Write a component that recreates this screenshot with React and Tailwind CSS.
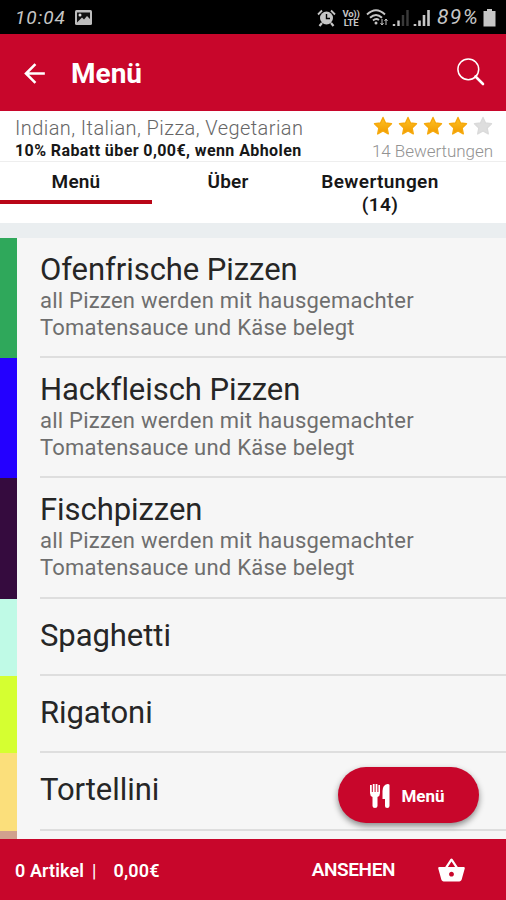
import { MdArrowBack, MdShoppingBasket } from 'react-icons/md';

const categories = [
  { name: 'Ofenfrische Pizzen', text: true, color: 'bg-[#2fa85b]', size: 'h-[120px]' },
  { name: 'Hackfleisch Pizzen', text: true, color: 'bg-[#2400ff]', size: 'h-[120px]' },
  { name: 'Fischpizzen', text: true, color: 'bg-[#350b3e]', size: 'h-[121px]' },
  { name: 'Spaghetti', color: 'bg-[#bffae6]', size: 'h-[77px]' },
  { name: 'Rigatoni', color: 'bg-[#d5ff31]', size: 'h-[77px]' },
  { name: 'Tortellini', color: 'bg-[#fbdf7b]', size: 'h-[78px]' },
];

function StatusBar() {
  return (
    <div className="flex h-[34px] shrink-0 items-center justify-between bg-black pl-[15px] pr-[10px] text-[#c6c6c6]">
      <div className="flex items-center">
        <span className="w-[59px] whitespace-nowrap text-[19px] italic leading-none tracking-[1px]">10:04</span>
        <svg width="19" height="17" viewBox="0 0 19 17">
          <rect x="1" y="1" width="17" height="15" rx="1.5" fill="#bdbdbd" />
          <path d="M3 3.5h13v6.5l-3-3-3 3.5-2-2-5 5z" fill="#111" />
          <circle cx="6" cy="6" r="1.5" fill="#ddd" />
        </svg>
      </div>
      <div className="flex items-center pt-px">
        <svg width="19" height="18" viewBox="0 0 19 18" fill="none" stroke="#c6c6c6">
          <circle cx="9.5" cy="9" r="6.5" fill="#c6c6c6" stroke="none" />
          <path d="M1 5.5 5 1.5M18 5.5l-4-4" strokeWidth="1.8" />
          <path d="M5 14l-2.5 3M14 14l2.5 3" strokeWidth="2.2" />
          <path d="M9.5 5v4.5H13" stroke="#000" strokeWidth="1.4" />
        </svg>
        <span className="ml-[6px] w-[18px] text-center text-[9.5px] font-bold leading-[9px] tracking-[-0.2px]">Vo)) LTE</span>
        <svg className="ml-[6px]" width="65" height="19" viewBox="0 0 65 19" fill="none" stroke="#c6c6c6">
          <path d="M1 6.5Q10-2 19 6.5" strokeWidth="1.9" />
          <path d="M4 9.8Q10 4 16 9.8M7 12.5Q10 9.8 13 12" strokeWidth="1.9" />
          <circle cx="10" cy="15" r="1.5" fill="#c6c6c6" stroke="none" />
          <path d="M16 11v6m-1.5-2 1.5 2 1.5-2M20 17v-6m-1.5 2 1.5-2 1.5 2" strokeWidth="1" />
          <path d="M28 16v2M32.5 12.5V18" strokeWidth="2.4" />
          <path d="M37 7v11M41.5 2v16" stroke="#3a3a3a" strokeWidth="2.4" />
          <path d="M49 16v2M53.5 12.5V18M58 7v11M62.5 2v16" strokeWidth="2.6" />
        </svg>
        <span className="ml-[6px] w-[43px] whitespace-nowrap text-[21px] italic leading-none tracking-[1.4px]">89%</span>
        <svg className="ml-[3px]" width="13" height="18" viewBox="0 0 13 18" fill="#c6c6c6">
          <path d="M4 0h5v2h3.5v15.5H.5V2H4z" />
        </svg>
      </div>
    </div>
  );
}

function Header() {
  return (
    <header className="flex h-[77px] shrink-0 items-center bg-[#c8062b] pl-[19px] pr-[21px] text-white">
      <MdArrowBack className="mt-[2px] h-[31px] w-[31px]" />
      <h1 className="ml-[21px] mt-[2px] text-[28px] font-bold leading-none">Menü</h1>
      <svg className="mb-[3px] ml-auto" width="29" height="29" viewBox="0 0 29 29" fill="none" stroke="currentColor">
        <circle cx="12.3" cy="12.3" r="10.4" strokeWidth="1.5" />
        <path d="M19.5 19.5 27 27" strokeWidth="2.6" strokeLinecap="round" />
      </svg>
    </header>
  );
}

function Star({ filled }) {
  return (
    <svg width="20" height="20" viewBox="0 0 20 20">
      <defs>
        <linearGradient id="gold" x1="0" y1="0" x2="0" y2="1">
          <stop offset="0" stopColor="#ffc323" />
          <stop offset="1" stopColor="#f09a00" />
        </linearGradient>
      </defs>
      <path
        d="M10 1.5 12.5 7l6 .7-4.4 4.2 1.2 6L10 15l-5.3 2.9 1.2-6L1.5 7.7l6-.7z"
        fill={filled ? 'url(#gold)' : '#dedede'}
        stroke={filled ? '#f6a90c' : '#dadada'}
        strokeWidth="1.4"
        strokeLinejoin="round"
      />
    </svg>
  );
}

function Info() {
  return (
    <section className="flex h-[51px] shrink-0 justify-between border-b border-[#eeeeee] bg-white pl-[15px] pr-[13px]">
      <div className="pt-[6px]">
        <p className="whitespace-nowrap text-[20px] font-light leading-[23px] tracking-[0.43px] text-[#666]">Indian, Italian, Pizza, Vegetarian</p>
        <p className="whitespace-nowrap text-[16px] font-bold leading-[22px] tracking-[0.41px] text-[#171717]">10% Rabatt über 0,00€, wenn Abholen</p>
      </div>
      <div className="flex flex-col items-end pt-[5px]">
        <div className="flex gap-[5px]">
          {[1, 2, 3, 4, 5].map((n) => <Star key={n} filled={n <= 4} />)}
        </div>
        <p className="mt-[5px] whitespace-nowrap text-[17px] font-light leading-[20px] tracking-[-0.05px] text-[#929292]">14 Bewertungen</p>
      </div>
    </section>
  );
}

function Tabs() {
  return (
    <nav className="flex h-[61px] shrink-0 bg-white text-center text-[19px] font-semibold leading-[23px] tracking-[0.2px] text-[#171717]">
      <div className="h-[42px] w-[152px] border-b-4 border-[#b90617] pt-[8px]">Menü</div>
      <div className="w-[152px] pt-[8px]">Über</div>
      <div className="w-[152px] pt-[8px] tracking-[0.4px]">Bewertungen (14)</div>
    </nav>
  );
}

function Category({ name, text, color, size }) {
  return (
    <div className={`flex shrink-0 ${size}`}>
      <div className={`w-[17px] shrink-0 ${color}`} />
      <div className={`ml-[23px] flex-1 border-b-2 border-[#dedede] ${text ? 'pt-[13px]' : 'pt-[18px]'}`}>
        <h2 className="whitespace-nowrap text-[31px] font-normal leading-[38px] tracking-[-0.06px] text-[#262626]">{name}</h2>
        {text && (
          <p className="-mt-[2px] whitespace-nowrap text-[22px] font-normal leading-[27px] tracking-[0.24px] text-[#6e6e6e]">
            all Pizzen werden mit hausgemachter<br />Tomatensauce und Käse belegt
          </p>
        )}
      </div>
    </div>
  );
}

function Cutlery() {
  return (
    <svg width="20" height="24" viewBox="0 0 20 24" fill="white">
      <path d="M0 1h1.8v7h1V0h1.8v8h1V0h1.8v8h1V1H10v8q0 3-2.5 4v9q0 2-2.5 2t-2.5-2v-9Q0 12 0 9z" />
      <path d="M19.5 1v21q0 2-2.3 2T15 22v-7h-2.5V7q0-6 5-7 2 0 2 1z" />
    </svg>
  );
}

export default function App() {
  return (
    <div className="relative flex h-[900px] w-[506px] flex-col overflow-hidden bg-[#f6f6f6] font-[Roboto,sans-serif]">
      <StatusBar />
      <Header />
      <Info />
      <Tabs />
      <div className="h-[15px] shrink-0 bg-[#eaeef0]" />
      <main className="flex h-[601px] shrink-0 flex-col overflow-hidden">
        {categories.map((c) => <Category key={c.name} {...c} />)}
        <div className="h-[8px] w-[17px] shrink-0 bg-[#d1a18e]" />
      </main>
      <footer className="flex h-[61px] shrink-0 items-center bg-[#c8062b] pl-[15px] pr-[40px] pt-[2px] text-[18px] font-semibold text-white">
        <span className="tracking-[0.1px]">0 Artikel</span>
        <span className="ml-[8px] font-normal">|</span>
        <span className="ml-[17px] tracking-[0.2px]">0,00€</span>
        <span className="ml-auto text-[19px] tracking-[-0.4px]">ANSEHEN</span>
        <MdShoppingBasket className="ml-[42px] h-[29px] w-[29px]" />
      </footer>
      {/* Floating menu button */}
      <button className="absolute bottom-[77px] right-[27px] flex h-[56px] w-[141px] items-center justify-center gap-[11px] rounded-full bg-[#c8062b] pr-[2px] pt-px text-[17px] font-bold text-white shadow-[0_3px_6px_rgba(0,0,0,0.45)]">
        <Cutlery />
        <span className="pt-[2px]">Menü</span>
      </button>
    </div>
  );
}
